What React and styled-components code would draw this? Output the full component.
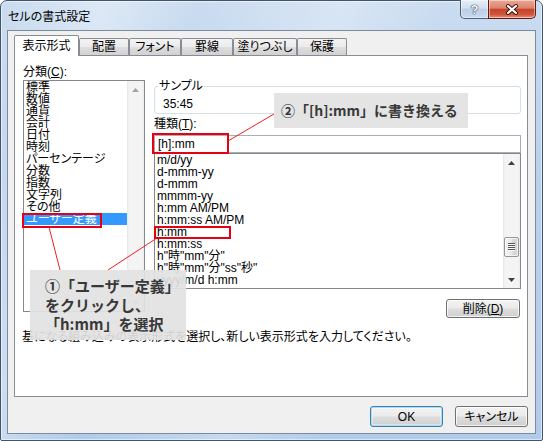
import React from 'react';
import styled, { createGlobalStyle } from 'styled-components';

const UI_FONT = `"Liberation Sans", "Noto Sans CJK JP", sans-serif`;
const JP_FONT = `"Noto Sans CJK JP", "Liberation Sans", sans-serif`;

const GlobalStyle = createGlobalStyle`
  html, body {
    margin: 0;
    padding: 0;
    background: #fff;
  }
  body {
    font-family: ${UI_FONT};
    font-feature-settings: "palt";
    color: #000;
  }
`;

const Stage = styled.div`
  position: relative;
  width: 543px;
  height: 441px;
  overflow: hidden;
`;

const Window = styled.div`
  box-sizing: border-box;
  width: 543px;
  height: 441px;
  display: flex;
  flex-direction: column;
  padding: 0 6px 6px;
  border: 1px solid #43536a;
  border-radius: 7px 7px 2px 2px;
  background:
    linear-gradient(105deg, rgba(255,255,255,0) 0%, rgba(255,255,255,0.35) 16%, rgba(255,255,255,0) 30%, rgba(255,255,255,0.28) 52%, rgba(255,255,255,0) 68%),
    linear-gradient(180deg, #cadcf0 0%, #b9d1eb 40%, #b0cbea 100%);
  box-shadow: inset 0 0 0 1px rgba(255,255,255,0.55);
`;

const TitleBar = styled.div`
  height: 29px;
  flex-shrink: 0;
  display: flex;
  justify-content: space-between;
  align-items: flex-start;
`;

const Title = styled.div`
  padding-left: 1px;
  font-family: ${JP_FONT};
  font-size: 12px;
  line-height: 29px;
  color: #000;
`;

const CaptionButtons = styled.div`
  display: flex;
  margin-top: -1px;
`;

const CaptionButton = styled.div`
  box-sizing: border-box;
  width: ${(p) => p.$w}px;
  height: 19px;
  display: flex;
  align-items: center;
  justify-content: center;
  border: 1px solid ${(p) => (p.$close ? '#5d1b12' : '#4c5f78')};
  border-top: none;
  border-radius: ${(p) => (p.$close ? '0 0 5px 0' : '0 0 0 5px')};
  background: ${(p) =>
    p.$close
      ? 'linear-gradient(180deg, #e9a897 0%, #dc836c 45%, #c8442c 52%, #cf5436 80%, #e5937a 100%)'
      : 'linear-gradient(180deg, #e6eef7 0%, #d2e0f0 45%, #bccfe7 52%, #c9dbef 100%)'};
  box-shadow: inset 0 0 0 1px rgba(255,255,255,0.45);
  ${(p) => (p.$close ? 'margin-left: -1px;' : '')}
`;

const HelpGlyph = styled.span`
  font-family: "Liberation Sans", sans-serif;
  font-weight: bold;
  font-size: 13px;
  line-height: 13px;
  color: #fff;
  text-shadow: 0 0 1px #2b3b52, 0 0 1px #2b3b52, 0 0 1px #2b3b52;
`;

const Client = styled.div`
  flex: 1;
  display: flex;
  flex-direction: column;
  border: 1px solid #7b8a9c;
  background: #f0f0f0;
  padding: 4px 7px 0 6px;
`;

const TabStrip = styled.div`
  display: flex;
  align-items: flex-end;
  height: 21px;
  margin-bottom: -1px;
  position: relative;
  z-index: 1;
`;

const Tab = styled.div`
  box-sizing: border-box;
  width: ${(p) => p.$w}px;
  height: ${(p) => (p.$active ? 21 : 17)}px;
  margin-bottom: ${(p) => (p.$active ? 0 : 1)}px;
  display: flex;
  align-items: center;
  justify-content: center;
  border: 1px solid #898c95;
  border-bottom: none;
  border-radius: 2px 2px 0 0;
  background: ${(p) =>
    p.$active ? '#fff' : 'linear-gradient(180deg, #f3f3f3 0%, #ebebeb 48%, #dddddd 52%, #d2d2d2 100%)'};
  font-size: 12px;
  line-height: 12px;
  padding-bottom: ${(p) => (p.$active ? 1 : 0)}px;
`;

const Panel = styled.div`
  position: relative;
  box-sizing: border-box;
  height: 342px;
  border: 1px solid #898c95;
  background: #fff;
  padding: 10px 6px 0 8px;
`;

const TopRow = styled.div`
  display: flex;
  gap: 9px;
`;

const LeftCol = styled.div`
  width: 122px;
  display: flex;
  flex-direction: column;
`;

const RightCol = styled.div`
  width: 367px;
  display: flex;
  flex-direction: column;
  padding-top: 14px;
`;

const FieldLabel = styled.div`
  font-size: 12px;
  line-height: 12px;
  margin: ${(p) => p.$m || '0'};
  white-space: nowrap;
`;

const ListBox = styled.div`
  box-sizing: border-box;
  height: ${(p) => p.$h}px;
  display: flex;
  border: 1px solid #828790;
  background: #fff;
`;

const Items = styled.div`
  flex: 1;
  min-width: 0;
  overflow: hidden;
`;

const Item = styled.div`
  height: 12px;
  font-size: 12px;
  line-height: 12px;
  padding-left: 2px;
  white-space: nowrap;
  background: ${(p) => (p.$selected ? '#3399ff' : 'transparent')};
  color: ${(p) => (p.$selected ? '#fff' : '#000')};
`;

const ScrollBar = styled.div`
  width: 17px;
  flex-shrink: 0;
  display: flex;
  flex-direction: column;
  background: linear-gradient(90deg, #e6e6e6 0%, #f4f4f4 12%, #f4f4f4 88%, #ececec 100%);
`;

const ArrowBox = styled.div`
  height: 17px;
  flex-shrink: 0;
  display: flex;
  align-items: center;
  justify-content: center;
`;

const Track = styled.div`
  flex: 1;
`;

const Thumb = styled.div`
  box-sizing: border-box;
  margin: ${(p) => p.$top}px 1px 0;
  height: 20px;
  display: flex;
  align-items: center;
  justify-content: center;
  border: 1px solid #959595;
  border-radius: 2px;
  background: linear-gradient(90deg, #f3f3f3 0%, #e8e8e8 50%, #dadada 52%, #d2d2d2 100%);
  box-shadow: inset 0 0 0 1px rgba(255,255,255,0.7);
`;

const Group = styled.fieldset`
  box-sizing: border-box;
  height: 34px;
  margin: 0;
  min-width: 0;
  padding: 6px 4px 2px 3px;
  border: 1px solid #d5dfe5;
  border-radius: 3px;
`;

const Legend = styled.legend`
  padding: 0 1px;
  font-size: 12px;
  line-height: 12px;
`;

const SampleValue = styled.div`
  padding-left: 5px;
  font-size: 12px;
  line-height: 12px;
`;

const TextInput = styled.div`
  box-sizing: border-box;
  height: 18px;
  margin-top: 5px;
  padding-left: 3px;
  border: 1px solid #abadb3;
  background: #fff;
  font-size: 12px;
  line-height: 16px;
`;

const ButtonRow = styled.div`
  display: flex;
  justify-content: flex-end;
  gap: 12px;
  margin: ${(p) => p.$m || '0'};
`;

const PushButton = styled.div`
  box-sizing: border-box;
  width: ${(p) => p.$w}px;
  height: ${(p) => p.$h}px;
  display: flex;
  align-items: center;
  justify-content: center;
  border: 1px solid ${(p) => (p.$default ? '#3c7fb1' : '#707070')};
  border-radius: 3px;
  background: linear-gradient(180deg, #f2f2f2 0%, #ebebeb 48%, #dddddd 52%, #cfcfcf 100%);
  box-shadow: ${(p) =>
    p.$default ? 'inset 0 0 0 1px #a9dcf5, inset 0 0 0 2px rgba(255,255,255,0.4)' : 'inset 0 0 0 1px rgba(255,255,255,0.75)'};
  font-size: 12px;
  line-height: 12px;
`;

const Description = styled.div`
  margin: 13px 0 0 -1px;
  font-size: 12px;
  line-height: 12px;
  white-space: nowrap;
`;

/* annotation layer drawn over the dialog */

const Lines = styled.svg`
  position: absolute;
  left: 0;
  top: 0;
  pointer-events: none;
`;

const RedBox = styled.div`
  position: absolute;
  box-sizing: border-box;
  left: ${(p) => p.$x}px;
  top: ${(p) => p.$y}px;
  width: ${(p) => p.$w}px;
  height: ${(p) => p.$h}px;
  border: 2px solid #e60012;
  pointer-events: none;
`;

const Callout = styled.div`
  position: absolute;
  box-sizing: border-box;
  left: ${(p) => p.$x}px;
  top: ${(p) => p.$y}px;
  width: ${(p) => p.$w}px;
  height: ${(p) => p.$h}px;
  padding: ${(p) => p.$pad};
  background: rgba(226, 226, 226, 0.92);
  font-family: ${JP_FONT};
  font-feature-settings: normal;
  font-weight: bold;
  font-size: ${(p) => p.$fs}px;
  line-height: ${(p) => p.$lh}px;
  color: #383838;
  white-space: nowrap;
`;

const tabs = [
  { label: '表示形式', w: 65, active: true },
  { label: '配置', w: 50 },
  { label: 'フォント', w: 52 },
  { label: '罫線', w: 52 },
  { label: '塗りつぶし', w: 64 },
  { label: '保護', w: 50 },
];

const categories = [
  '標準', '数値', '通貨', '会計', '日付', '時刻', 'パーセンテージ',
  '分数', '指数', '文字列', 'その他', 'ユーザー定義',
];

const formats = [
  'm/d/yy', 'd-mmm-yy', 'd-mmm', 'mmmm-yy', 'h:mm AM/PM', 'h:mm:ss AM/PM',
  'h:mm', 'h:mm:ss', 'h"時"mm"分"', 'h"時"mm"分"ss"秒"', 'yyyy/m/d h:mm',
];

const Arrow = ({ up, color }) => (
  <svg width="7" height="4" viewBox="0 0 7 4">
    <path d={up ? 'M0 4 L3.5 0 L7 4 Z' : 'M0 0 L3.5 4 L7 0 Z'} fill={color} />
  </svg>
);

const Grip = () => (
  <svg width="7" height="8" viewBox="0 0 7 8">
    {[0, 2, 4, 6].map((y) => (
      <g key={y}>
        <rect x="0" y={y} width="7" height="1" fill="#555" />
        <rect x="0" y={y + 1} width="7" height="1" fill="#fff" opacity="0.8" />
      </g>
    ))}
  </svg>
);

const VScroll = ({ disabled, thumbTop }) => {
  const color = disabled ? '#a3a3a3' : '#404040';
  return (
    <ScrollBar>
      <ArrowBox><Arrow up color={color} /></ArrowBox>
      <Track>
        {thumbTop != null && (
          <Thumb $top={thumbTop}><Grip /></Thumb>
        )}
      </Track>
      <ArrowBox><Arrow color={color} /></ArrowBox>
    </ScrollBar>
  );
};

const CloseGlyph = () => (
  <svg width="14" height="11" viewBox="0 0 14 11">
    <path d="M3 2 L11 9 M11 2 L3 9" stroke="#3a0f08" strokeWidth="4" strokeLinecap="round" />
    <path d="M3 2 L11 9 M11 2 L3 9" stroke="#fff" strokeWidth="2.2" strokeLinecap="round" />
  </svg>
);

const App = () => (
  <Stage>
    <GlobalStyle />
    <Window>
      <TitleBar>
        <Title>セルの書式設定</Title>
        <CaptionButtons>
          <CaptionButton $w={29}><HelpGlyph>?</HelpGlyph></CaptionButton>
          <CaptionButton $w={48} $close><CloseGlyph /></CaptionButton>
        </CaptionButtons>
      </TitleBar>

      <Client>
        <TabStrip>
          {tabs.map((t) => (
            <Tab key={t.label} $w={t.w} $active={t.active}>{t.label}</Tab>
          ))}
        </TabStrip>

        <Panel>
          <TopRow>
            <LeftCol>
              <FieldLabel $m="0 0 2px">分類(<u>C</u>):</FieldLabel>
              <ListBox $h={232}>
                <Items>
                  {categories.map((c) => (
                    <Item key={c} $selected={c === 'ユーザー定義'}>{c}</Item>
                  ))}
                </Items>
                <VScroll disabled />
              </ListBox>
            </LeftCol>

            <RightCol>
              <Group>
                <Legend>サンプル</Legend>
                <SampleValue>35:45</SampleValue>
              </Group>
              <FieldLabel $m="4px 0 0">種類(<u>T</u>):</FieldLabel>
              <TextInput>[h]:mm</TextInput>
              <ListBox $h={136}>
                <Items>
                  {formats.map((f) => (
                    <Item key={f}>{f}</Item>
                  ))}
                </Items>
                <VScroll thumbTop={66} />
              </ListBox>
              <ButtonRow $m="10px 1px 0 0">
                <PushButton $w={74} $h={19}>削除(<u>D</u>)</PushButton>
              </ButtonRow>
            </RightCol>
          </TopRow>

          <Description>
            基になる組み込みの表示形式を選択し、新しい表示形式を入力してください。
          </Description>
        </Panel>

        <ButtonRow $m="9px 0 0">
          <PushButton $w={73} $h={21} $default>OK</PushButton>
          <PushButton $w={73} $h={21}>キャンセル</PushButton>
        </ButtonRow>
      </Client>
    </Window>

    <Lines width="543" height="441" viewBox="0 0 543 441">
      <line x1="49" y1="227" x2="60" y2="270" stroke="#f02020" strokeWidth="1" />
      <line x1="157" y1="238" x2="108" y2="270" stroke="#f02020" strokeWidth="1" />
      <line x1="274" y1="114" x2="228" y2="141" stroke="#f02020" strokeWidth="1" />
    </Lines>

    <RedBox $x={22} $y={213} $w={80} $h={15} />
    <RedBox $x={152} $y={133} $w={77} $h={21} />
    <RedBox $x={154} $y={226} $w={77} $h={13} />

    <Callout $x={274} $y={93} $w={194} $h={35} $pad="0 0 0 7px" $lh={35} $fs={14}>
      ②「[h]:mm」に書き換える
    </Callout>
    <Callout $x={30} $y={270} $w={156} $h={70} $pad="6px 0 0 15px" $lh={19} $fs={15}>
      ①「ユーザー定義」<br />
      をクリックし、<br />
      「h:mm」を選択
    </Callout>
  </Stage>
);

export default App;
